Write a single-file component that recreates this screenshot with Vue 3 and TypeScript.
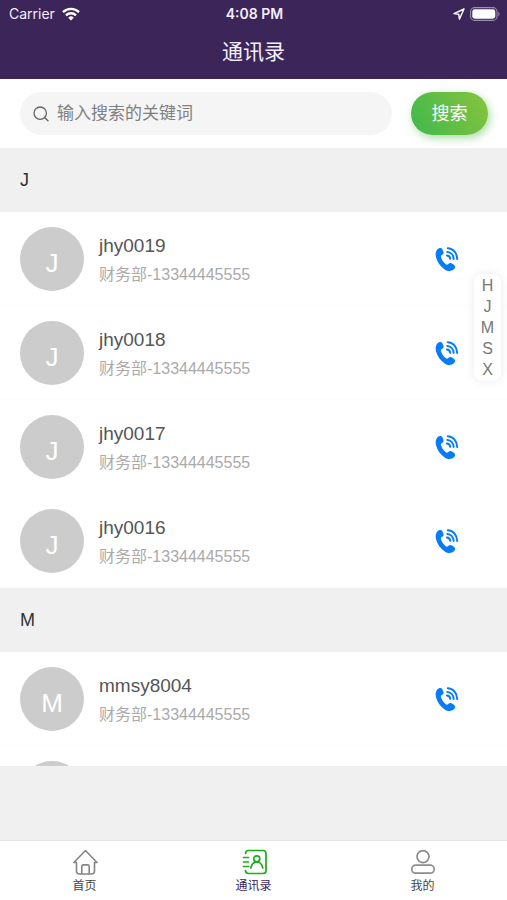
<script setup lang="ts">
import { ref } from 'vue'

interface Contact {
  id: string
  name: string
  department: string
  phone: string
}

interface Group {
  letter: string
  contacts: Contact[]
}

const make = (name: string): Contact => ({
  id: name,
  name,
  department: '财务部',
  phone: '13344445555',
})

const groups: Group[] = [
  { letter: 'J', contacts: ['jhy0019', 'jhy0018', 'jhy0017', 'jhy0016'].map(make) },
  { letter: 'M', contacts: ['mmsy8004', 'mmsy8003'].map(make) },
]

const letters: string[] = ['H', 'J', 'M', 'S', 'X']
const keyword = ref<string>('')
</script>

<template>
  <div class="page">
    <header class="header">
      <div class="status">
        <div class="status-left">
          <span>Carrier</span>
          <svg class="wifi" viewBox="0 0 18 14" aria-hidden="true">
            <g fill="none" stroke="#fff" stroke-width="2.4">
              <path d="M1 5.2a11.3 11.3 0 0 1 16 0" />
              <path d="M4 8.4a7 7 0 0 1 10 0" />
            </g>
            <path d="M9 13.6 6.2 10.7a4 4 0 0 1 5.6 0z" fill="#fff" />
          </svg>
        </div>
        <span class="time">4:08 PM</span>
        <div class="status-right">
          <svg class="location" viewBox="0 0 12 12" aria-hidden="true">
            <path d="M11 1 1 5.6l4.8.7.6 4.8z" fill="none" stroke="#fff" stroke-width="1.4" stroke-linejoin="round" />
          </svg>
          <svg class="battery" viewBox="0 0 30 14" aria-hidden="true">
            <rect x="0.6" y="0.6" width="26.4" height="12.8" rx="4" fill="none" stroke="#9b8fae" stroke-width="1.1" />
            <rect x="2.3" y="2.3" width="23" height="9.4" rx="2.4" fill="#fff" />
            <path d="M28.3 4.8c1.7.8 1.7 3.6 0 4.4z" fill="#9b8fae" />
          </svg>
        </div>
      </div>
      <h1 class="title">通讯录</h1>
    </header>

    <form class="search" @submit.prevent>
      <label class="field">
        <svg class="magnifier" viewBox="0 0 16 16" aria-hidden="true">
          <circle cx="7.2" cy="7.2" r="6.2" fill="none" stroke="#666" stroke-width="1.3" />
          <path d="m11.8 11.8 3.2 3" stroke="#666" stroke-width="1.4" stroke-linecap="round" />
        </svg>
        <input v-model="keyword" type="text" placeholder="输入搜索的关键词" />
      </label>
      <button class="submit" type="submit">搜索</button>
    </form>

    <div class="content">
      <main class="list">
        <section v-for="group in groups" :key="group.letter">
          <h2 class="letter">{{ group.letter }}</h2>
          <ul class="contacts">
            <li v-for="contact in group.contacts" :key="contact.id" class="contact">
              <span class="avatar">{{ group.letter }}</span>
              <div class="info">
                <span class="name">{{ contact.name }}</span>
                <span class="detail">{{ contact.department }}-{{ contact.phone }}</span>
              </div>
              <a class="call" :href="`tel:${contact.phone}`" :aria-label="contact.name">
                <svg viewBox="0 0 24 26" aria-hidden="true">
                  <path
                    d="M2.500 3.200C4 1.500 6.400 1.400 7.400 3.200l1 2.600c.5 1.500 0 2.600-1.900 3.500-.7.400-.7 1.300-.4 2.200.9 2.700 2.500 5.100 4.700 6.700.8.6 1.500.7 2.200 0 1.300-1.300 2.800-1.500 4.100-.6l2 1.500c1.500 1.200 1.300 2.900-.2 4.200-2.400 2.200-6 2.200-9.200.1C5.600 20.600 2.200 16.200 1 11.200.3 7.800.7 5.100 2.500 3.200z"
                    fill="#087cf5"
                  />
                  <g fill="none" stroke="#087cf5" stroke-width="2" stroke-linecap="round">
                    <path d="M12.800 2.200c5.200.2 9.300 4.900 9.400 10.800" />
                    <path d="M12.300 5.900c3.500.2 6.200 3.200 6.400 7" />
                    <path d="M11.900 9.500c1.900.1 3.200 1.500 3.400 3.300" />
                  </g>
                </svg>
              </a>
            </li>
          </ul>
        </section>
      </main>
      <nav class="index" aria-label="A-Z">
        <a v-for="letter in letters" :key="letter" href="#">{{ letter }}</a>
      </nav>
    </div>

    <nav class="tabs">
      <a class="tab" href="#">
        <svg viewBox="0 0 26 26" fill="none" stroke="#858585" stroke-width="1.6" stroke-linecap="round" stroke-linejoin="round" aria-hidden="true">
          <path d="M4.500 13.500H1.800L13.500 1.500l11.500 12h-2.500v8.500q0 3-3 3h-1.200M4.500 13.500V22q0 3 3 3h10" />
          <path d="M9.800 24.500v-7q0-1.600 1.600-1.600h4.200q1.600 0 1.600 1.600v7" />
        </svg>
        <span>首页</span>
      </a>
      <a class="tab active" href="#">
        <svg viewBox="0 0 26 26" fill="none" stroke="#1aad19" stroke-width="1.700" stroke-linecap="round" stroke-linejoin="round" aria-hidden="true">
          <path d="M4.500 4.500q0-3 3-3H22q3 0 3 3v17q0 3-3 3H7.500q-3 0-3-3" />
          <path d="M2.500 8.500H7.500M2.500 13H7.500M2.500 17.500H7.500" />
          <circle cx="15.800" cy="9.800" r="3" />
          <path d="M9.800 19c.7-3.700 3-6 6-6s5.300 2.300 6 6" />
        </svg>
        <span>通讯录</span>
      </a>
      <a class="tab" href="#">
        <svg viewBox="0 0 26 26" fill="none" stroke="#8c8c8c" stroke-width="1.700" aria-hidden="true">
          <circle cx="13" cy="7.600" r="6" />
          <rect x="1.800" y="16.200" width="22.400" height="8" rx="4" />
        </svg>
        <span>我的</span>
      </a>
    </nav>
  </div>
</template>

<style>
body {
  margin: 0;
}
</style>

<style scoped>
.page {
  display: flex;
  flex-direction: column;
  height: 100vh;
  background: #f0f0f0;
  color: #333;
  font-family: "Liberation Sans", "Noto Sans CJK SC", sans-serif;
}

a {
  color: inherit;
  text-decoration: none;
}

svg {
  display: block;
}

.header {
  flex: none;
  background: #3b2559;
  color: #f3effa;
}

.status {
  display: grid;
  grid-template-columns: 1fr auto 1fr;
  align-items: center;
  height: 27px;
  padding: 0 7px 0 9px;
  font-family: Inter, sans-serif;
  font-size: 14px;
}

.status-left,
.status-right {
  display: flex;
  align-items: center;
  gap: 7px;
}

.status-right {
  justify-content: flex-end;
  gap: 5px;
}

.wifi {
  width: 18px;
  height: 14px;
}

.location {
  width: 12px;
  height: 12px;
}

.battery {
  width: 30px;
  height: 14px;
}

.time {
  font-weight: 600;
}

.title {
  margin: 0;
  height: 52px;
  font-size: 21px;
  line-height: 50px;
  font-weight: 400;
  text-align: center;
}

.search {
  display: flex;
  flex: none;
  align-items: center;
  gap: 19px;
  height: 69px;
  padding: 0 19px 0 20px;
  background: #fff;
}

.field {
  display: flex;
  flex: 1;
  align-items: center;
  gap: 8px;
  min-width: 0;
  height: 43px;
  padding: 0 13px;
  border-radius: 22px;
  background: #f5f5f5;
}

.magnifier {
  flex: none;
  width: 16px;
  height: 16px;
}

.field input {
  flex: 1;
  min-width: 0;
  padding: 0;
  border: 0;
  outline: 0;
  background: transparent;
  color: #333;
  font: inherit;
  font-size: 17px;
}

.field input::placeholder {
  color: #808080;
  opacity: 1;
}

.submit {
  flex: none;
  width: 77px;
  height: 43px;
  padding: 0 0 3px;
  border: 0;
  border-radius: 22px;
  background: linear-gradient(60deg, #3fb84e, #88c43c);
  box-shadow: 2px 3px 8px rgba(80, 190, 70, 0.5);
  color: #fff;
  font: inherit;
  font-size: 18px;
}

.content {
  position: relative;
  display: flex;
  flex: 1;
  flex-direction: column;
  min-height: 0;
  padding-bottom: 74px;
}

.list {
  flex: 1;
  min-height: 0;
  overflow-y: auto;
  scrollbar-width: none;
}

.letter {
  margin: 0;
  padding: 0 20px;
  font-size: 18px;
  line-height: 64px;
  font-weight: 400;
}

.contacts {
  margin: 0;
  padding: 0;
  list-style: none;
  background: #fff;
}

.contact {
  display: flex;
  align-items: center;
  gap: 15px;
  box-sizing: border-box;
  height: 94px;
  padding: 0 48px 0 20px;
  border-bottom: 1px solid #fcfcfc;
}

.avatar {
  flex: none;
  box-sizing: border-box;
  width: 64px;
  height: 64px;
  padding-top: 6px;
  border-radius: 50%;
  background: #ccc;
  color: #fff;
  font-size: 26px;
  line-height: 60px;
  text-align: center;
}

.info {
  display: flex;
  flex: 1;
  flex-direction: column;
  gap: 4px;
  padding-top: 2px;
}

.name {
  color: #555;
  font-size: 19px;
  line-height: 26px;
}

.detail {
  color: #aaa;
  font-size: 16px;
  line-height: 24px;
}

.call svg {
  width: 24px;
  height: 26px;
}

.index {
  position: absolute;
  top: 126px;
  right: 6px;
  display: flex;
  flex-direction: column;
  width: 27px;
  padding: 1px 0;
  border-radius: 8px;
  background: #fff;
  box-shadow: 0 0 8px rgba(0, 0, 0, 0.09);
  color: #777;
  font-size: 16px;
  line-height: 21px;
  text-align: center;
}

.tabs {
  display: flex;
  flex: none;
  box-sizing: border-box;
  height: 60px;
  border-top: 1px solid #e6e6e6;
  background: #fff;
}

.tab {
  display: flex;
  flex: 1;
  flex-direction: column;
  align-items: center;
  gap: 2px;
  padding-top: 8px;
  color: #444;
  font-size: 12px;
  line-height: 18px;
}

.tab svg {
  width: 26px;
  height: 26px;
}

.tab.active {
  color: #3b2559;
}
</style>
